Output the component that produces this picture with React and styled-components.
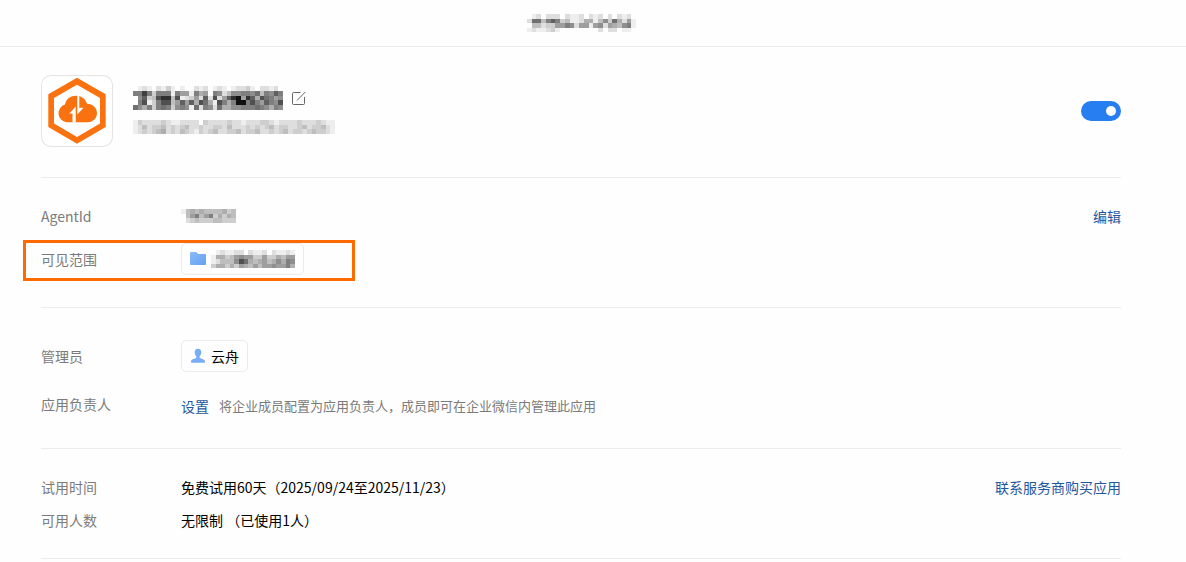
import React, { useState } from "react";
import styled, { createGlobalStyle } from "styled-components";

const GlobalStyle = createGlobalStyle`
  * {
    box-sizing: border-box;
  }
  body {
    margin: 0;
    background: #fefefe;
    color: #000;
    font-family: "Noto Sans CJK SC", "Liberation Sans", sans-serif;
    font-size: 14px;
    line-height: 20px;
  }
`;

const TopBar = styled.header`
  display: flex;
  align-items: center;
  justify-content: center;
  height: 47px;
  padding-right: 24px;
  border-bottom: 1px solid #ebebeb;
`;

const Content = styled.main`
  padding: 0 65px 0 41px;
`;

const Section = styled.section`
  display: flex;
  flex-direction: column;
  gap: ${(props) => props.$gap || 0}px;
  padding: ${(props) => props.$pad};
  border-bottom: 1px solid #ebebeb;
`;

const AppHead = styled.div`
  display: flex;
  align-items: center;
  gap: 20px;
`;

const LogoBox = styled.div`
  display: flex;
  width: 72px;
  height: 72px;
  border-radius: 10px;
  background: #fff;
  box-shadow: inset 0 0 0 1px #e4e4e4;
`;

const AppInfo = styled.div`
  display: flex;
  flex-direction: column;
  flex: 1;
  gap: 10px;
  padding-bottom: 2px;
`;

const AppName = styled.h1`
  display: flex;
  align-items: center;
  gap: 9px;
  margin: 0;
`;

const IconButton = styled.button`
  display: flex;
  padding: 0;
  border: 0;
  background: none;
  cursor: pointer;
`;

const Switch = styled.input`
  appearance: none;
  display: flex;
  align-items: center;
  justify-content: ${(props) => (props.checked ? "flex-end" : "flex-start")};
  width: 40px;
  height: 20px;
  margin: 0;
  padding: 0 5px;
  border-radius: 10px;
  background: ${(props) => (props.checked ? "#267ef0" : "#c8c8c8")};
  cursor: pointer;
  &::before {
    content: "";
    width: 10px;
    height: 10px;
    border-radius: 50%;
    background: #fff;
  }
`;

const Row = styled.div`
  position: relative;
  display: flex;
  align-items: ${(props) => props.$align || "center"};
`;

const Label = styled.div`
  width: 140px;
  flex-shrink: 0;
  color: #7b7b7b;
`;

const Value = styled.div`
  display: flex;
  align-items: center;
  flex: 1;
  gap: 10px;
  line-height: ${(props) => (props.$tall ? 24 : 20)}px;
`;

const Hint = styled.span`
  color: #7b7b7b;
  font-size: 13px;
`;

const TextLink = styled.a`
  color: #1f57a0;
  text-decoration: none;
`;

const Chip = styled.div`
  display: flex;
  align-items: center;
  gap: 5px;
  height: 32px;
  padding: 0 8px;
  border: 1px solid #ebebeb;
  border-radius: 5px;
`;

// frame that sits over the visible range row
const Highlight = styled.div`
  position: absolute;
  top: -3px;
  bottom: -6px;
  left: -18px;
  width: 332px;
  border: 3px solid #ff6a00;
  pointer-events: none;
`;

const Blocks = styled.svg`
  display: block;
  flex-shrink: 0;
`;

// every hex digit is one block, 0 is clear and f is black
const topName = [
  "01202220211202120202120",
  "29948a83411255147395261",
  "04423366872661672654781",
  "12112310000000020220110",
];
const appName = [
  "01210213101002120121012231022120",
  "88c838881866185608724778879487a8",
  "07a34bdd4b12362a2b26adf6da5b9867",
  "08b138bb46a6a5b951b858ff8b86a87b",
  "97583898378719287295577888987587",
];
const appDesc = [
  "1322223211222203222232212223321222232223211",
  "1242334232342232233242223232342332234233421",
  "1232345232432132342233423342232342332343321",
];
const agentId = ["145454444534", "046846835354", "023433344333"];
const scope = [
  "012112202112021121",
  "155346766336335466",
  "124447b95456457587",
  "355353654646676685",
];

const Mosaic = ({ rows, width, height }) => (
  <Blocks
    width={width}
    height={height}
    viewBox={`0 0 ${rows[0].length} ${rows.length}`}
    preserveAspectRatio="none"
    shapeRendering="crispEdges"
    aria-hidden="true"
  >
    {rows.map((row, y) =>
      row.split("").map((level, x) => (
        <rect
          key={`${x}-${y}`}
          x={x}
          y={y}
          width="1"
          height="1"
          fill="#000"
          fillOpacity={parseInt(level, 16) / 16}
        />
      ))
    )}
  </Blocks>
);

const Logo = () => (
  <svg width="72" height="72" viewBox="0 0 72 72" aria-hidden="true">
    <path
      fill="#fa7210"
      fillRule="evenodd"
      d="M36 2.7 64.7 19.3V52L36 68.7 7.3 52V19.3ZM36 9.7 13 23v25.5L36 62l23-13.5V23Z"
    />
    <path
      fill="#fa7210"
      d="M25.5 47.2a9 9 0 0 1-1.500-17.600C25 24 29.500 20.800 35 20.800c5.500 0 9.500 3 11 8 5.500 0 10 4 10 9.300 0 5.200-4 9.100-9 9.100Z"
    />
    <path fill="#fff" d="M34.7 31.500V47.500h-3.200V38.500h-3.200Z" />
    <path fill="#fff" d="M36.3 20h2v12.800h4.200l-6.200 6.700Z" />
  </svg>
);

const EditIcon = () => (
  <svg width="14" height="14" viewBox="0 0 14 14" fill="none" stroke="#666">
    <path d="M8.5 1.500H1.500a1 1 0 0 0-1 1v10a1 1 0 0 0 1 1h10a1 1 0 0 0 1-1V6M5 9.500 13.300 1" />
  </svg>
);

const FolderIcon = () => (
  <svg width="16" height="16" viewBox="0 0 16 16" aria-hidden="true">
    <defs>
      <linearGradient id="folder" x1="0" y1="0" x2="1" y2="1">
        <stop offset="0" stopColor="#8abaf8" />
        <stop offset="1" stopColor="#64a1f1" />
      </linearGradient>
    </defs>
    <path
      fill="url(#folder)"
      d="M1 1h5.200l2 2H15a1 1 0 0 1 1 1v9a1 1 0 0 1-1 1H1a1 1 0 0 1-1-1V2a1 1 0 0 1 1-1Z"
    />
  </svg>
);

const PersonIcon = () => (
  <svg width="16" height="16" viewBox="0 0 16 16" aria-hidden="true">
    <path
      fill="#78adf5"
      d="M8 .8c2.200 0 3.400 1.500 3.300 3.600-.1 1.700-.8 2.900-1.600 3.700v1.700c.5 1 4.800 1 5.300 3.400.1.900-.3 1.600-1 1.600H2c-.7 0-1.100-.7-1-1.600.5-2.400 4.800-2.400 5.300-3.400V8.100C5.500 7.300 4.800 6.100 4.700 4.400 4.600 2.300 5.800.8 8 .8Z"
    />
  </svg>
);

const App = () => {
  const [enabled, setEnabled] = useState(true);
  return (
    <>
      <GlobalStyle />
      <TopBar>
        <Mosaic rows={topName} width={109} height={18} />
      </TopBar>
      <Content>
        <Section $pad="28px 0 30px">
          <AppHead>
            <LogoBox>
              <Logo />
            </LogoBox>
            <AppInfo>
              <AppName>
                <Mosaic rows={appName} width={150} height={24} />
                <IconButton type="button" aria-label="编辑名称">
                  <EditIcon />
                </IconButton>
              </AppName>
              <Mosaic rows={appDesc} width={202} height={14} />
            </AppInfo>
            <Switch
              type="checkbox"
              role="switch"
              aria-label="启用应用"
              checked={enabled}
              onChange={(e) => setEnabled(e.target.checked)}
            />
          </AppHead>
        </Section>
        <Section $pad="28px 0 32px" $gap={17}>
          <Row>
            <Label>AgentId</Label>
            <Value>
              <Mosaic rows={agentId} width={55} height={14} />
            </Value>
            <TextLink href="#edit">编辑</TextLink>
          </Row>
          <Row>
            <Label>可见范围</Label>
            <Value>
              <Chip>
                <FolderIcon />
                <Mosaic rows={scope} width={84} height={18} />
              </Chip>
            </Value>
            <Highlight />
          </Row>
        </Section>
        <Section $pad="32px 0 30px" $gap={22}>
          <Row>
            <Label>管理员</Label>
            <Value>
              <Chip>
                <PersonIcon />
                云舟
              </Chip>
            </Value>
          </Row>
          <Row $align="flex-start">
            <Label>应用负责人</Label>
            <Value $tall>
              <TextLink href="#owner">设置</TextLink>
              <Hint>
                将企业成员配置为应用负责人，成员即可在企业微信内管理此应用
              </Hint>
            </Value>
          </Row>
        </Section>
        <Section $pad="28px 0 28px" $gap={13}>
          <Row>
            <Label>试用时间</Label>
            <Value>免费试用60天（2025/09/24至2025/11/23）</Value>
            <TextLink href="#buy">联系服务商购买应用</TextLink>
          </Row>
          <Row>
            <Label>可用人数</Label>
            <Value>无限制 （已使用1人）</Value>
          </Row>
        </Section>
      </Content>
    </>
  );
};

export default App;
